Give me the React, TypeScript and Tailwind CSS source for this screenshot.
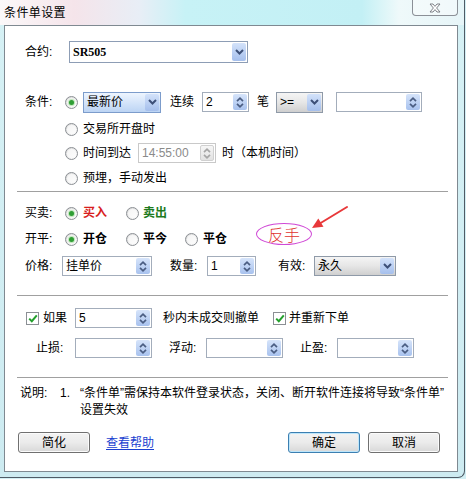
import React from "react";

const SANS = "font-['Liberation_Sans','Noto_Sans_CJK_SC',sans-serif]";

function UpDown({ disabled = false }: { disabled?: boolean }) {
  const c = disabled ? "#a6a6a6" : "#4a5d82";
  return (
    <svg width="8" height="13" viewBox="0 0 8 13">
      <path d="M1 5.2 L4 2.2 L7 5.2" fill="none" stroke={c} strokeWidth="1.7" />
      <path d="M1 7.8 L4 10.8 L7 7.8" fill="none" stroke={c} strokeWidth="1.7" />
    </svg>
  );
}

function Chevron() {
  return (
    <svg width="9" height="6" viewBox="0 0 9 6">
      <path d="M1 1 L4.5 4.5 L8 1" fill="none" stroke="#3d5078" strokeWidth="2" />
    </svg>
  );
}

function Spin({
  w,
  value = "",
  disabled = false,
  className = "",
}: {
  w: string;
  value?: string;
  disabled?: boolean;
  className?: string;
}) {
  return (
    <div
      className={`flex h-[20px] border bg-white ${w} ${className} ${
        disabled ? "border-[#c9c9c9]" : "border-[#a3adbb]"
      }`}
    >
      <span
        className={`flex-1 pl-[3px] text-[12px] leading-[18px] whitespace-nowrap ${
          disabled ? "text-[#8a8a8a]" : "text-black"
        }`}
      >
        {value}
      </span>
      <div
        className={`w-[14px] my-[1px] mr-[1px] rounded-[2px] flex items-center justify-center ${
          disabled
            ? "bg-gradient-to-b from-[#f6f6f6] to-[#e2e2e2] border border-[#d0d0d0]"
            : "bg-gradient-to-b from-[#d6e4fa] to-[#a8c2ee]"
        }`}
      >
        <UpDown disabled={disabled} />
      </div>
    </div>
  );
}

function Combo({
  w,
  children,
  tone = "white",
  className = "",
}: {
  w: string;
  children?: React.ReactNode;
  tone?: "white" | "blue" | "gray";
  className?: string;
}) {
  const bg =
    tone === "blue"
      ? "bg-gradient-to-b from-[#eef5fe] to-[#bcd4f4] border-[#7c9ccb]"
      : tone === "gray"
      ? "bg-gradient-to-b from-[#f5f5f5] via-[#e6e6e6] to-[#cfcfcf] border-[#8f9aa8]"
      : "bg-white border-[#8d9db5]";
  return (
    <div className={`flex border ${bg} ${w} ${className}`}>
      <div className="flex-1 pl-[3px] flex items-center text-[12px] whitespace-nowrap">{children}</div>
      <div className="w-[14px] my-[1px] mr-[1px] rounded-[2px] bg-gradient-to-b from-[#d3e2fa] to-[#a5bfec] flex items-center justify-center">
        <Chevron />
      </div>
    </div>
  );
}

function Radio({ checked = false }: { checked?: boolean }) {
  return (
    <span className="w-[13px] h-[13px] shrink-0 rounded-full border border-[#8b8f94] bg-gradient-to-br from-[#d8d8d8] to-white flex items-center justify-center">
      <span className="w-[9px] h-[9px] rounded-full bg-gradient-to-br from-[#f4f4f4] to-[#fdfdfd] flex items-center justify-center">
        {checked && (
          <span className="w-[5px] h-[5px] rounded-full bg-[#2f9e34] shadow-[0_0_1px_1px_#b9e3b4]" />
        )}
      </span>
    </span>
  );
}

function Check() {
  return (
    <span className="w-[13px] h-[13px] shrink-0 border border-[#8b8f94] bg-white flex items-center justify-center">
      <svg width="10" height="9" viewBox="0 0 10 9">
        <path d="M1.2 4.6 L3.8 7.2 L8.8 1.4" fill="none" stroke="#23a02c" strokeWidth="2" />
      </svg>
    </span>
  );
}

function Btn({ children, primary = false }: { children: React.ReactNode; primary?: boolean }) {
  return (
    <div
      className={`w-[72px] h-[21px] rounded-[3px] border flex items-center justify-center text-[12px] bg-gradient-to-b from-[#f3f3f3] via-[#ebebeb] to-[#d8d8d8] ${
        primary
          ? "border-[#3c7fb1] shadow-[inset_0_0_0_1px_#bde6fb]"
          : "border-[#707070] shadow-[inset_0_0_0_1px_#fbfbfb]"
      }`}
    >
      {children}
    </div>
  );
}

function Sep() {
  return <div className="ml-[12px] w-[431px] h-px bg-[#a0a0a0]" />;
}

export default function App() {
  return (
    <div className={`w-[466px] h-[479px] overflow-hidden bg-[#d3eff4] ${SANS} text-black`}>
      <div className="w-[465px] h-[478px] border-r border-b border-[#4f5b66] rounded-br-[7px] bg-gradient-to-b from-[#d6f1f5] to-[#cdebf1] flex flex-col">
        {/* title bar */}
        <div className="h-[25px] flex items-start bg-[linear-gradient(90deg,#fbf8f9_0%,#f5e4ea_16%,#e8eef6_30%,#c7f2f6_40%,#c3f0f5_78%,#eff9fa_86%,#e6f5f8_100%)]">
          <span className="ml-[4px] mt-[5px] text-[12px] leading-[16px] tracking-[0.4px]">条件单设置</span>
          <div className="ml-auto mr-[6px] w-[46px] h-[16px] rounded-b-[4px] border border-t-0 border-[#8b9097] bg-white/40 flex items-center justify-center">
            <svg width="12" height="10" viewBox="0 0 12 10">
              <path
                d="M1 1 H4 L6 3.4 L8 1 H11 L7.6 5 L11 9 H8 L6 6.6 L4 9 H1 L4.4 5 Z"
                fill="#ffffff"
                stroke="#70757c"
                strokeWidth="0.9"
              />
            </svg>
          </div>
        </div>

        {/* content panel */}
        <div className="relative ml-[4px] w-[454px] h-[447px] border border-[#7f8991] bg-white flex flex-col text-[12px] leading-[16px]">
          {/* 合约 */}
          <div className="mt-[15px] h-[22px] flex items-center pl-[20px]">
            <span className="w-[44px]">合约:</span>
            <Combo w="w-[179px] h-[22px]">
              <span className="font-['Liberation_Serif',serif] font-bold text-[12px]">SR505</span>
            </Combo>
          </div>

          {/* 条件 */}
          <div className="mt-[28px] h-[22px] flex items-center pl-[20px]">
            <span className="w-[40px]">条件:</span>
            <Radio checked />
            <Combo w="w-[78px] h-[21px]" tone="blue" className="ml-[5px]">
              最新价
            </Combo>
            <span className="ml-[9px] w-[24px]">连续</span>
            <Spin w="w-[47px]" value="2" className="ml-[8px]" />
            <span className="ml-[8px] w-[12px]">笔</span>
            <Combo w="w-[47px] h-[21px]" tone="gray" className="ml-[7px]">
              {">="}
            </Combo>
            <Spin w="w-[86px]" className="ml-[13px]" />
          </div>

          {/* 交易所开盘时 */}
          <div className="mt-[5px] h-[22px] flex items-center pl-[60px]">
            <Radio />
            <span className="ml-[5px]">交易所开盘时</span>
          </div>

          {/* 时间到达 */}
          <div className="mt-[2px] h-[22px] flex items-center pl-[60px]">
            <Radio />
            <span className="ml-[5px] w-[48px]">时间到达</span>
            <Spin w="w-[78px]" value="14:55:00" disabled className="ml-[7px]" />
            <span className="ml-[6px]">时（本机时间）</span>
          </div>

          {/* 预埋 */}
          <div className="mt-[3px] h-[22px] flex items-center pl-[60px]">
            <Radio />
            <span className="ml-[5px]">预埋，手动发出</span>
          </div>

          <div className="mt-[2px]">
            <Sep />
          </div>

          {/* 买卖 */}
          <div className="mt-[10px] h-[22px] flex items-center pl-[20px]">
            <span className="w-[40px]">买卖:</span>
            <Radio checked />
            <span className="ml-[5px] w-[24px] font-semibold text-[#d81e1e]">买入</span>
            <span className="ml-[19px]">
              <Radio />
            </span>
            <span className="ml-[4px] font-semibold text-[#1d7a1d]">卖出</span>
          </div>

          {/* 开平 */}
          <div className="mt-[4px] h-[22px] flex items-center pl-[20px]">
            <span className="w-[40px]">开平:</span>
            <Radio checked />
            <span className="ml-[5px] w-[24px] font-semibold">开仓</span>
            <span className="ml-[19px]">
              <Radio />
            </span>
            <span className="ml-[4px] w-[24px] font-semibold">平今</span>
            <span className="ml-[18px]">
              <Radio />
            </span>
            <span className="ml-[5px] w-[24px] font-semibold">平仓</span>
            <span className="ml-[29px] mb-[10px] w-[56px] h-[22px] rounded-[50%] border border-[#d04ad6] flex items-center justify-center text-[16px] leading-[20px] text-[#e0322e] font-['Noto_Sans_CJK_SC',sans-serif] font-light">
              反手
            </span>
          </div>

          {/* 价格 */}
          <div className="mt-[5px] h-[22px] flex items-center pl-[20px]">
            <span className="w-[37px]">价格:</span>
            <Spin w="w-[90px]" value="挂单价" />
            <span className="ml-[18px] w-[37px]">数量:</span>
            <Spin w="w-[49px]" value="1" />
            <span className="ml-[22px] w-[36px]">有效:</span>
            <Combo w="w-[82px] h-[20px]" tone="gray">
              永久
            </Combo>
          </div>

          <div className="mt-[18px]">
            <Sep />
          </div>

          {/* 如果 */}
          <div className="mt-[11px] h-[22px] flex items-center pl-[21px]">
            <Check />
            <span className="ml-[4px] w-[24px]">如果</span>
            <Spin w="w-[77px]" value="5" className="ml-[8px]" />
            <span className="ml-[11px] w-[96px]">秒内未成交则撤单</span>
            <span className="ml-[14px]">
              <Check />
            </span>
            <span className="ml-[3px]">并重新下单</span>
          </div>

          {/* 止损 */}
          <div className="mt-[8px] h-[22px] flex items-center pl-[31px]">
            <span className="w-[39px]">止损:</span>
            <Spin w="w-[77px]" />
            <span className="ml-[17px] w-[37px]">浮动:</span>
            <Spin w="w-[77px]" />
            <span className="ml-[17px] w-[37px]">止盈:</span>
            <Spin w="w-[77px]" />
          </div>

          <div className="mt-[18px]">
            <Sep />
          </div>

          {/* 说明 */}
          <div className="mt-[7px] flex pl-[15px] leading-[17px]">
            <span className="w-[40px] shrink-0">说明:</span>
            <span className="w-[20px] shrink-0">1.</span>
            <span className="whitespace-nowrap">
              <span className="font-['Liberation_Sans',sans-serif]">“</span>条件单
              <span className="font-['Liberation_Sans',sans-serif]">”</span>
              需保持本软件登录状态，关闭、断开软件连接将导致
              <span className="font-['Liberation_Sans',sans-serif]">“</span>条件单
              <span className="font-['Liberation_Sans',sans-serif]">”</span>
              <br />
              设置失效
            </span>
          </div>

          {/* buttons */}
          <div className="mt-[13px] h-[21px] flex items-center pl-[13px] pr-[17px]">
            <Btn>简化</Btn>
            <span className="ml-[16px] text-[#1a3fd0] underline underline-offset-2">查看帮助</span>
            <div className="ml-auto flex gap-[8px]">
              <Btn primary>确定</Btn>
              <Btn>取消</Btn>
            </div>
          </div>

          {/* annotation arrow */}
          <svg
            className="absolute left-[300px] top-[178px]"
            width="52"
            height="28"
            viewBox="0 0 52 28"
          >
            <path d="M42 3 L14 20" stroke="#e8383a" strokeWidth="2" strokeLinecap="round" />
            <polygon points="7,24 18.5,22.8 13.3,14.6" fill="#e8383a" />
          </svg>
        </div>
      </div>
    </div>
  );
}
